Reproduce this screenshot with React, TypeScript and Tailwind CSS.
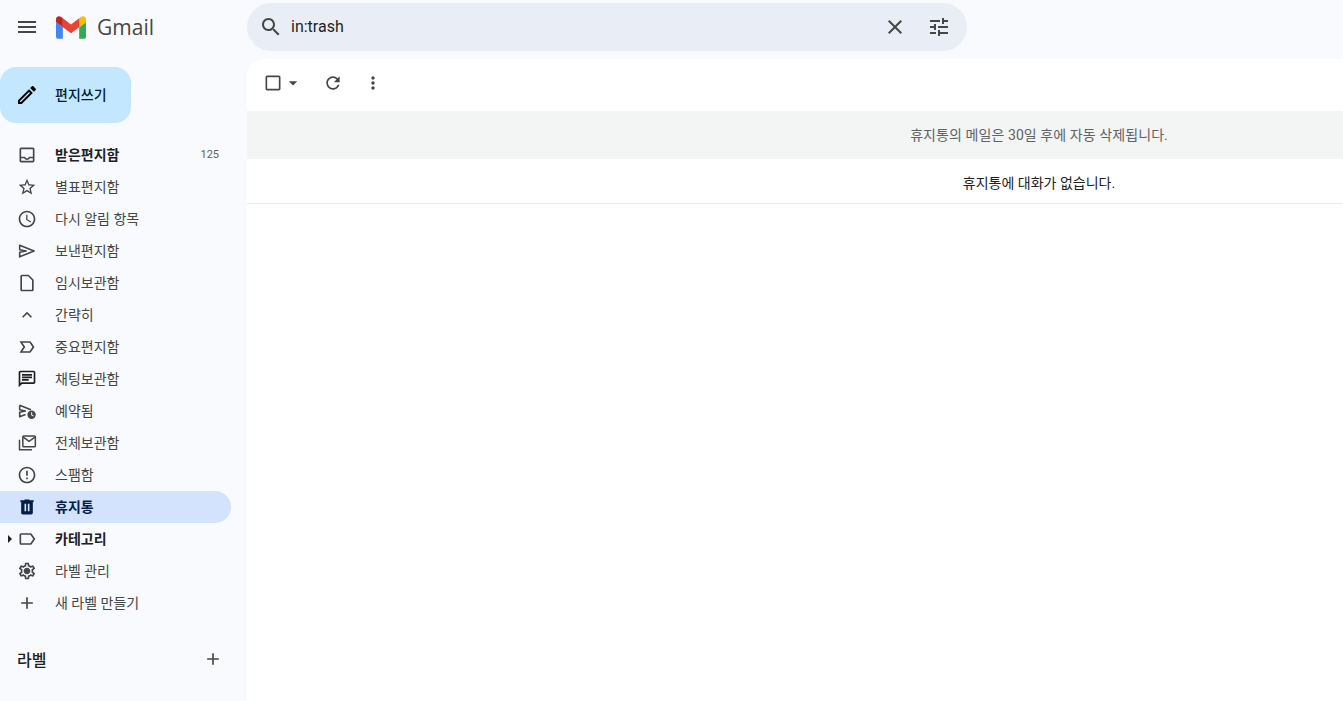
import React from 'react';

const FONT = "font-['Roboto','Noto_Sans_CJK_KR',sans-serif]";

// Material icon paths
const P = {
  menu: 'M3 18h18v-2H3v2zm0-5h18v-2H3v2zm0-7v2h18V6H3z',
  search: 'M15.5 14h-.79l-.28-.27C15.41 12.59 16 11.11 16 9.5 16 5.91 13.09 3 9.5 3S3 5.91 3 9.5 5.91 16 9.5 16c1.61 0 3.09-.59 4.23-1.57l.27.28v.79l5 4.99L20.49 19l-4.99-5zm-6 0C7.01 14 5 11.99 5 9.5S7.01 5 9.5 5 14 7.01 14 9.5 11.99 14 9.5 14z',
  close: 'M19 6.41L17.59 5 12 10.59 6.41 5 5 6.41 10.59 12 5 17.59 6.41 19 12 13.41 17.59 19 19 17.59 13.41 12z',
  tune: 'M3 17v2h6v-2H3zM3 5v2h10V5H3zm10 16v-2h8v-2h-8v-2h-2v6h2zM7 9v2H3v2h4v2h2V9H7zm14 4v-2H11v2h10zm-6-4h2V7h4V5h-4V3h-2v6z',
  pencil: 'M14.06 9.02l.92.92L5.92 19H5v-.92l9.06-9.06M17.66 3c-.25 0-.51.1-.7.29l-1.83 1.83 3.75 3.75 1.83-1.83c.39-.39.39-1.02 0-1.41l-2.34-2.34c-.2-.2-.45-.29-.71-.29zm-3.6 3.19L3 17.25V21h3.75L17.81 9.94l-3.75-3.75z',
  inbox: 'M19 3H5c-1.1 0-2 .9-2 2v14c0 1.1.9 2 2 2h14c1.1 0 2-.9 2-2V5c0-1.1-.9-2-2-2zm0 16H5v-3h3.56c.69 1.19 1.97 2 3.45 2s2.75-.81 3.45-2H19v3zm0-5h-5c0 1.1-.9 2-2 2s-2-.9-2-2H5V5h14v9z',
  star: 'M22 9.24l-7.19-.62L12 2 9.19 8.63 2 9.24l5.46 4.73L5.82 21 12 17.27 18.18 21l-1.63-7.03L22 9.24zM12 15.4l-3.76 2.27 1-4.28-3.32-2.88 4.38-.38L12 6.1l1.71 4.04 4.38.38-3.32 2.88 1 4.28L12 15.4z',
  clock: 'M11.99 2C6.47 2 2 6.48 2 12s4.47 10 9.99 10C17.52 22 22 17.52 22 12S17.52 2 11.99 2zM12 20c-4.42 0-8-3.58-8-8s3.58-8 8-8 8 3.58 8 8-3.58 8-8 8zm.5-13H11v6l5.25 3.15.75-1.23-4.5-2.67z',
  file: 'M6 2c-1.1 0-2 .9-2 2v16c0 1.1.9 2 2 2h12c1.1 0 2-.9 2-2V8l-6-6H6zm0 2h7.17L18 8.83V20H6V4z',
  less: 'M12 8l-6 6 1.41 1.41L12 10.83l4.59 4.58L18 14z',
  important: 'M15 19H3l4.5-7L3 5h12c.65 0 1.26.31 1.63.84L21 12l-4.37 6.16c-.37.52-.98.84-1.63.84zm-8.5-2H15l3.5-5L15 7H6.5l3.5 5-3.5 5z',
  chat: 'M20 2H4c-1.1 0-2 .9-2 2v18l4-4h14c1.1 0 2-.9 2-2V4c0-1.1-.9-2-2-2zm0 14H5.17L4 17.17V4h16v12zM6 12h8v2H6zm0-3h12v2H6zm0-3h12v2H6z',
  spam: 'M11 15h2v2h-2zm0-8h2v6h-2zm.99-5C6.47 2 2 6.48 2 12s4.47 10 9.99 10C17.52 22 22 17.52 22 12S17.52 2 11.99 2zM12 20c-4.42 0-8-3.58-8-8s3.58-8 8-8 8 3.58 8 8-3.58 8-8 8z',
  trash: 'M15 4V3H9v1H4v2h1v13c0 1.1.9 2 2 2h10c1.1 0 2-.9 2-2V6h1V4h-5zM9 8h2v9H9V8zm4 0h2v9h-2V8z',
  label: 'M17.63 5.84C17.27 5.33 16.67 5 16 5L5 5.01C3.9 5.01 3 5.9 3 7v10c0 1.1.9 1.99 2 1.99L16 19c.67 0 1.27-.33 1.63-.84L22 12l-4.37-6.16zM16 17H5V7h11l3.55 5L16 17z',
  gear: 'M19.43 12.98c.04-.32.07-.64.07-.98 0-.34-.03-.66-.07-.98l2.11-1.65c.19-.15.24-.42.12-.64l-2-3.46c-.09-.16-.26-.25-.44-.25-.06 0-.12.01-.17.03l-2.49 1c-.52-.4-1.08-.73-1.69-.98l-.38-2.65C14.46 2.18 14.25 2 14 2h-4c-.25 0-.46.18-.49.42l-.38 2.65c-.61.25-1.17.59-1.69.98l-2.49-1c-.06-.02-.12-.03-.18-.03-.17 0-.34.09-.43.25l-2 3.46c-.13.22-.07.49.12.64l2.11 1.65c-.04.32-.07.65-.07.98 0 .33.03.66.07.98l-2.11 1.65c-.19.15-.24.42-.12.64l2 3.46c.09.16.26.25.44.25.06 0 .12-.01.17-.03l2.49-1c.52.4 1.08.73 1.69.98l.38 2.65c.03.24.24.42.49.42h4c.25 0 .46-.18.49-.42l.38-2.65c.61-.25 1.17-.59 1.69-.98l2.49 1c.06.02.12.03.18.03.17 0 .34-.09.43-.25l2-3.46c.12-.22.07-.49-.12-.64l-2.11-1.65zm-1.98-1.71c.04.31.05.52.05.73 0 .21-.02.43-.05.73l-.14 1.13.89.7 1.08.84-.7 1.21-1.27-.51-1.04-.42-.9.68c-.43.32-.84.56-1.25.73l-1.06.43-.16 1.13-.2 1.35h-1.4l-.19-1.35-.16-1.13-1.06-.43c-.43-.18-.83-.41-1.23-.71l-.91-.7-1.06.43-1.27.51-.7-1.21 1.08-.84.89-.7-.14-1.13c-.03-.31-.05-.54-.05-.74s.02-.43.05-.73l.14-1.13-.89-.7-1.08-.84.7-1.21 1.27.51 1.04.42.9-.68c.43-.32.84-.56 1.25-.73l1.06-.43.16-1.13.2-1.35h1.39l.19 1.35.16 1.13 1.06.43c.43.18.83.41 1.23.71l.91.7 1.06-.43 1.27-.51.7 1.21-1.07.85-.89.7.14 1.13zM12 8c-2.21 0-4 1.79-4 4s1.79 4 4 4 4-1.79 4-4-1.79-4-4-4z',
  add: 'M19 13h-6v6h-2v-6H5v-2h6V5h2v6h6v2z',
  checkbox: 'M19 5v14H5V5h14m0-2H5c-1.1 0-2 .9-2 2v14c0 1.1.9 2 2 2h14c1.1 0 2-.9 2-2V5c0-1.1-.9-2-2-2z',
  caret: 'M7 10l5 5 5-5z',
  refresh: 'M17.65 6.35C16.2 4.9 14.21 4 12 4c-4.42 0-7.99 3.58-7.99 8s3.57 8 7.99 8c3.73 0 6.84-2.55 7.73-6h-2.08c-.82 2.33-3.04 4-5.65 4-3.31 0-6-2.69-6-6s2.69-6 6-6c1.66 0 3.14.69 4.22 1.78L13 11h7V4l-2.35 2.35z',
  more: 'M12 8c1.1 0 2-.9 2-2s-.9-2-2-2-2 .9-2 2 .9 2 2 2zm0 2c-1.1 0-2 .9-2 2s.9 2 2 2 2-.9 2-2-.9-2-2-2zm0 6c-1.1 0-2 .9-2 2s.9 2 2 2 2-.9 2-2-.9-2-2-2z',
};

const Icon = ({ d, className }: { d: string; className: string }) => (
  <svg viewBox="0 0 24 24" fill="currentColor" className={`shrink-0 ${className}`}>
    <path d={d} />
  </svg>
);

const SendIcon = () => (
  <svg viewBox="0 0 24 24" className="w-5 h-5 shrink-0" fill="none" stroke="currentColor" strokeWidth="1.9" strokeLinejoin="round">
    <path d="M3.2 5l17.3 7-17.3 7v-5.4L11 12l-7.8-1.6z" />
  </svg>
);

const ScheduledIcon = () => (
  <svg viewBox="0 0 24 24" className="w-5 h-5 shrink-0" fill="none">
    <path d="M3.2 5l13.5 5.5M3.2 5v5.4L10 12l-6.8 1.6V19l7-2.8" stroke="currentColor" strokeWidth="1.9" strokeLinejoin="round" />
    <circle cx="17.5" cy="16.5" r="5" fill="currentColor" />
    <path d="M17 13.5h1.2v3l2 1.2-.6.9-2.6-1.6z" fill="#f8fafd" />
  </svg>
);

const AllMailIcon = () => (
  <svg viewBox="0 0 24 24" className="w-5 h-5 shrink-0" fill="none" stroke="currentColor" strokeWidth="1.8">
    <rect x="7" y="3.5" width="15" height="13" rx="1" />
    <path d="M7.5 5l7 5 7-5" />
    <path d="M3 8v12h15" />
  </svg>
);

type Item = { label: string; d?: string; custom?: React.ReactNode; bold?: boolean; count?: string; active?: boolean; arrow?: boolean; dark?: boolean };

const items: Item[] = [
  { label: '받은편지함', d: P.inbox, bold: true, count: '125' },
  { label: '별표편지함', d: P.star },
  { label: '다시 알림 항목', d: P.clock },
  { label: '보낸편지함', custom: <SendIcon /> },
  { label: '임시보관함', d: P.file },
  { label: '간략히', d: P.less },
  { label: '중요편지함', d: P.important },
  { label: '채팅보관함', d: P.chat, dark: true },
  { label: '예약됨', custom: <ScheduledIcon /> },
  { label: '전체보관함', custom: <AllMailIcon /> },
  { label: '스팸함', d: P.spam },
  { label: '휴지통', d: P.trash, active: true, bold: true },
  { label: '카테고리', d: P.label, bold: true, arrow: true },
  { label: '라벨 관리', d: P.gear },
  { label: '새 라벨 만들기', d: P.add },
];

const NavRow = ({ item }: { item: Item }) => (
  <div className={`flex items-center h-8 w-[231px] rounded-r-2xl ${item.active ? 'bg-[#d3e3fd] text-[#041e49]' : 'text-[#444746]'}`}>
    <div className="w-[17px] h-full flex items-center pl-2 shrink-0">
      {item.arrow && <div className="w-0 h-0 border-y-[4px] border-y-transparent border-l-[4px] border-l-[#1f1f1f]" />}
    </div>
    {item.custom ?? <Icon d={item.d!} className={`w-5 h-5 ${item.dark ? 'text-[#1f1f1f]' : ''}`} />}
    <span className={`ml-[18px] text-sm leading-5 ${item.bold ? `font-bold ${item.active ? '' : 'text-[#202124]'}` : ''}`}>{item.label}</span>
    {item.count && <span className="ml-auto mr-3 text-[11px] text-[#5f6368]">{item.count}</span>}
  </div>
);

export default function App() {
  return (
    <div className={`${FONT} h-[701px] w-[1343px] overflow-hidden bg-[#f8fafd] flex`}>
      <aside className="w-[247px] shrink-0 flex flex-col">
        <div className="h-[59px] shrink-0 flex items-start pl-[15px] pt-[15px]">
          <Icon d={P.menu} className="w-6 h-6 text-[#444746]" />
          <svg viewBox="52 42 88 66" className="w-[30px] h-[23px] ml-[17px] mt-[1px] shrink-0">
            <path fill="#4285f4" d="M58 108h14V74L52 59v43c0 3.32 2.69 6 6 6" />
            <path fill="#34a853" d="M120 108h14c3.32 0 6-2.69 6-6V59l-20 15" />
            <path fill="#fbbc04" d="M120 48v26l20-15v-8c0-7.42-8.47-11.65-14.4-7.2" />
            <path fill="#ea4335" d="M72 74V48l24 18 24-18v26L96 92" />
            <path fill="#c5221f" d="M52 51v8l20 15V48l-5.6-4.2c-5.94-4.45-14.4-.22-14.4 7.2" />
          </svg>
          <span className="ml-[11px] text-[21px] leading-6 text-[#444746] font-['Open_Sans',sans-serif]">Gmail</span>
        </div>
        <div className="mt-2 w-[131px] h-14 shrink-0 rounded-2xl bg-[#c2e7ff] flex items-center pl-[15px] text-[#001d35]">
          <Icon d={P.pencil} className="w-6 h-6 text-black" />
          <span className="ml-4 text-sm font-medium">편지쓰기</span>
        </div>
        <nav className="mt-4 flex flex-col">
          {items.map((item) => (
            <NavRow key={item.label} item={item} />
          ))}
        </nav>
        <div className="mt-[25px] h-8 flex items-center justify-between pl-[17px] pr-6">
          <span className="text-base font-medium text-[#1f1f1f] pt-[2px]">라벨</span>
          <Icon d={P.add} className="w-5 h-5 text-[#444746] -translate-y-px" />
        </div>
      </aside>

      <main className="flex-1 min-w-0 flex flex-col">
        <div className="h-[59px] shrink-0 pt-[3px]">
          <div className="w-[720px] h-12 rounded-3xl bg-[#e9eef6] flex items-center pl-3 pr-4 text-[#444746]">
            <Icon d={P.search} className="w-6 h-6" />
            <span className="ml-2 text-base text-[#1f1f1f] flex-1">in:trash</span>
            <Icon d={P.close} className="w-6 h-6" />
            <Icon d={P.tune} className="w-6 h-6 ml-5" />
          </div>
        </div>
        <div className="flex-1 bg-white rounded-tl-2xl overflow-hidden">
          <div className="h-[52px] flex items-center pl-4 pb-1 text-[#444746]">
            <Icon d={P.checkbox} className="w-5 h-5" />
            <Icon d={P.caret} className="w-5 h-5" />
            <Icon d={P.refresh} className="w-5 h-5 ml-5" />
            <Icon d={P.more} className="w-5 h-5 ml-5" />
          </div>
          <div className="w-[1584px]">
            <div className="h-12 bg-[#f2f5f3] flex items-center justify-center text-sm text-[#5f6368] tracking-[0.08px]">
              휴지통의 메일은 30일 후에 자동 삭제됩니다.
            </div>
            <div className="h-[45px] pt-1 border-b border-[#ebebeb] flex items-center justify-center text-sm text-[#202124]">
              휴지통에 대화가 없습니다.
            </div>
          </div>
        </div>
      </main>
    </div>
  );
}
